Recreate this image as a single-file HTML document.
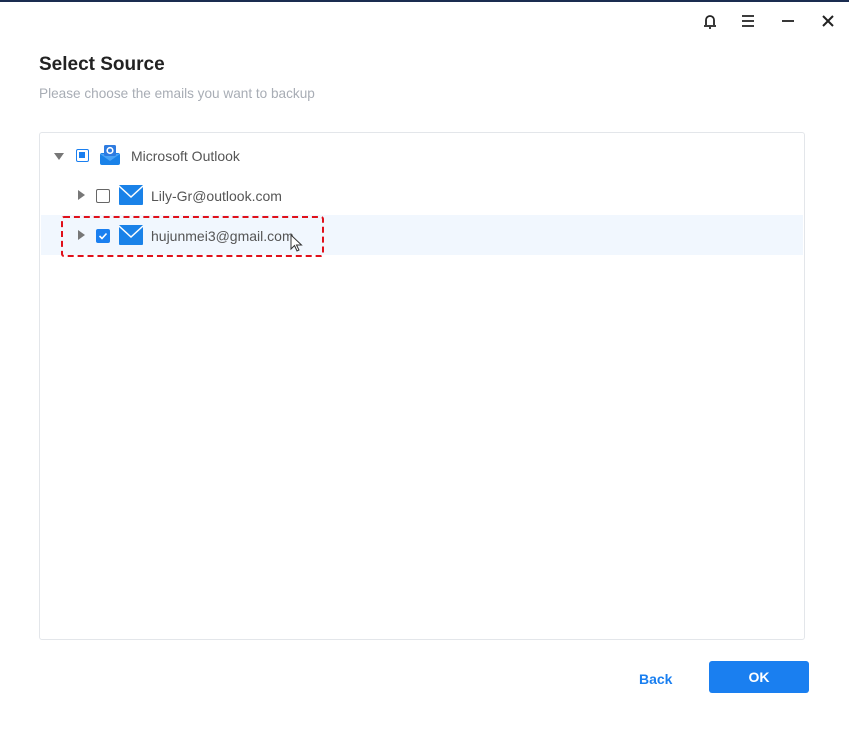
<!DOCTYPE html>
<html><head><style>
*{margin:0;padding:0;box-sizing:border-box}
body{width:849px;height:729px;background:#fff;font-family:"Liberation Sans",sans-serif;position:relative;overflow:hidden}
.topline{position:absolute;left:0;top:0;width:849px;height:2px;background:#1a2c50}
h1{position:absolute;left:39px;top:54px;font-size:19px;font-weight:bold;color:#222}
.sub{position:absolute;left:39px;top:86px;font-size:13.6px;color:#a8adb5}
.panel{position:absolute;left:39px;top:132px;width:766px;height:508px;border:1px solid #e3e6ea;border-radius:3px}
.row{position:absolute;left:1px;width:762px;height:40px}
.sel{background:#f1f7fe}
.tri{position:absolute;width:0;height:0}
.txt{position:absolute;font-size:14px;color:#555;top:13px}
.btn{position:absolute;font-size:14px;font-weight:bold}
</style></head><body>
<div class="topline"></div>
<svg style="position:absolute;left:700px;top:12px" width="150" height="18">
<path d="M4 14h12M6 13V8a4 4 0 0 1 8 0v5M9 16h2" stroke="#222" stroke-width="1.8" fill="none"/>
<path d="M42 4h12M42 9h12M42 14h12" stroke="#222" stroke-width="1.8"/>
<path d="M82 9h12" stroke="#222" stroke-width="1.8"/>
<path d="M123 4l10 10M133 4l-10 10" stroke="#222" stroke-width="2"/>
</svg>
<h1>Select Source</h1>
<div class="sub">Please choose the emails you want to backup</div>
<div class="panel">
 <div class="row" style="top:2px">
  <div class="tri" style="left:13px;top:18px;border-left:5px solid transparent;border-right:5px solid transparent;border-top:7px solid #777"></div>
  <div style="position:absolute;left:35px;top:14px;width:13px;height:13px;border:1.5px solid #1a7ff0;border-radius:2px"><div style="margin:2px;width:6px;height:6px;background:#1a7ff0"></div></div>
  <svg style="position:absolute;left:58px;top:9px" width="22" height="22"><rect x="1" y="9" width="20" height="12" rx="2" fill="#1a82e8"/><path d="M1 10l10 7 10-7" fill="#4aa3f5"/><rect x="5" y="1" width="12" height="11" rx="1.5" fill="#2e7be0"/><circle cx="11" cy="6.5" r="2.8" fill="none" stroke="#fff" stroke-width="1.6"/></svg>
  <div class="txt" style="left:90px">Microsoft Outlook</div>
 </div>
 <div class="row" style="top:42px">
  <div class="tri" style="left:37px;top:15px;border-top:5px solid transparent;border-bottom:5px solid transparent;border-left:7px solid #777"></div>
  <div style="position:absolute;left:55px;top:14px;width:14px;height:14px;border:1.5px solid #666;border-radius:2px"></div>
  <svg style="position:absolute;left:78px;top:10px" width="24" height="20"><rect width="24" height="20" rx="1" fill="#1a82e8"/><path d="M0 1l12 11L24 1" fill="none" stroke="#fff" stroke-width="1.5"/></svg>
  <div class="txt" style="left:110px">Lily-Gr@outlook.com</div>
 </div>
 <div class="row sel" style="top:82px">
  <div class="tri" style="left:37px;top:15px;border-top:5px solid transparent;border-bottom:5px solid transparent;border-left:7px solid #777"></div>
  <div style="position:absolute;left:55px;top:14px;width:14px;height:14px;background:#1a7ff0;border-radius:2px"><svg width="14" height="14" style="position:absolute;left:0;top:0"><path d="M3.5 7l2.5 2.5 4.5-5" fill="none" stroke="#fff" stroke-width="1.6"/></svg></div>
  <svg style="position:absolute;left:78px;top:10px" width="24" height="20"><rect width="24" height="20" rx="1" fill="#1a82e8"/><path d="M0 1l12 11L24 1" fill="none" stroke="#fff" stroke-width="1.5"/></svg>
  <div class="txt" style="left:110px">hujunmei3@gmail.com</div>
  <svg style="position:absolute;left:249px;top:19px" width="14" height="20"><path d="M1 1v14l3.5-3.5 2.5 5.5 2-1-2.5-5h5z" fill="#fff" stroke="#333" stroke-width="1"/></svg>
 </div>
</div>
<div style="position:absolute;left:61px;top:216px;width:263px;height:41px;border:2.5px dashed #e0101a;border-radius:3px"></div>
<div class="btn" style="left:639px;top:671px;color:#1a7ff0">Back</div>
<div style="position:absolute;left:709px;top:661px;width:100px;height:32px;background:#1a7ff0;border-radius:3px;color:#fff;font-weight:bold;font-size:14px;text-align:center;line-height:32px">OK</div>
</body></html>
